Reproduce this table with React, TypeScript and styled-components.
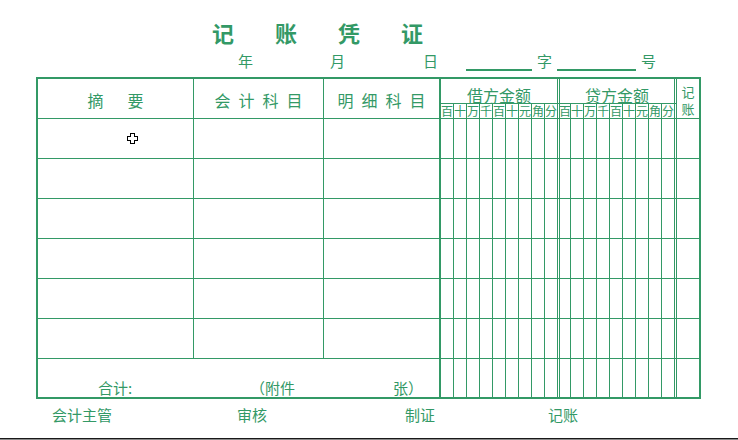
import React from 'react';
import styled, { createGlobalStyle, css } from 'styled-components';

const G = '#339966';

const GlobalStyle = createGlobalStyle`
  html, body { margin: 0; padding: 0; background: #fff; }
  body { font-family: "Noto Sans CJK SC", "Noto Sans", sans-serif; color: ${G}; }
`;

const Page = styled.div`
  width: 738px;
  height: 440px;
  display: flex;
  flex-direction: column;
  background: #fff;
  overflow: hidden;
`;

const Title = styled.h1`
  margin: 21px 0 0;
  padding-left: 212px;
  display: flex;
  gap: 41px;
  font-size: 22px;
  line-height: 22px;
  font-weight: 700;
  color: ${G};
`;

const DateRow = styled.div`
  display: flex;
  align-items: flex-end;
  height: 18px;
  margin-top: 10px;
  padding-left: 238px;
  font-size: 15px;
  line-height: 16px;
`;

const Slot = styled.span<{ $w: number; $center?: boolean; $pl?: number }>`
  width: ${(p) => p.$w}px;
  flex: none;
  text-align: ${(p) => (p.$center ? 'center' : 'left')};
  padding-left: ${(p) => p.$pl ?? 0}px;
  padding-bottom: 2px;
  box-sizing: border-box;
  white-space: pre;
`;

const Blank = styled.span<{ $w: number }>`
  width: ${(p) => p.$w}px;
  height: 2px;
  flex: none;
  background: ${G};
`;

const Sheet = styled.div`
  margin: 6px 0 0 36px;
  width: 665px;
  height: 322px;
  box-sizing: border-box;
  border: 2px solid ${G};
  display: grid;
  grid-template-columns: 156px 130px 117px repeat(8, 13px) 15px 11px repeat(7, 13px) 15px 22px;
  grid-template-rows: 25px 15px repeat(6, 40px) 38px;
`;

type Line = 'none' | 'thin' | 'thick' | 'double';

const lineCss = (l: Line) => {
  switch (l) {
    case 'thin':
      return `1px solid ${G}`;
    case 'thick':
      return `2px solid ${G}`;
    case 'double':
      return `3px double ${G}`;
    default:
      return 'none';
  }
};

const Cell = styled.div<{ $r: Line; $b?: boolean; $cs?: number; $rs?: number }>`
  box-sizing: border-box;
  position: relative;
  min-width: 0;
  border-right: ${(p) => lineCss(p.$r)};
  border-bottom: ${(p) => (p.$b ? `1px solid ${G}` : 'none')};
  ${(p) => p.$cs && css`grid-column: span ${p.$cs};`}
  ${(p) => p.$rs && css`grid-row: span ${p.$rs};`}
  display: flex;
  align-items: center;
  justify-content: center;
`;

const HeadLabel = styled.div<{ $gap: number }>`
  display: flex;
  gap: ${(p) => p.$gap}px;
  font-size: 16px;
  line-height: 16px;
  padding-top: 2px;
`;

const MoneyCell = styled(Cell)`
  align-items: flex-end;
  font-size: 16px;
  line-height: 16px;
`;

const DigitHead = styled(Cell)`
  font-size: 12px;
  line-height: 14px;
  overflow: visible;
  white-space: nowrap;
`;

const JzHead = styled(Cell)`
  flex-direction: column;
  justify-content: flex-end;
  padding-bottom: 1px;
  font-size: 13px;
  line-height: 17px;
`;

const TotalCell = styled(Cell)`
  justify-content: flex-start;
  align-items: flex-end;
  padding: 0 0 1px 60px;
  font-size: 15px;
  line-height: 17px;
`;

const Signatures = styled.div`
  display: flex;
  margin-top: 7px;
  padding-left: 52px;
  font-size: 15px;
  line-height: 17px;
`;

const SigSlot = styled.span<{ $w: number }>`
  width: ${(p) => p.$w}px;
  flex: none;
`;

const Filler = styled.div`
  flex: 1;
`;

const BottomEdge = styled.div`
  height: 1px;
  border-top: 1px solid #1a1a1a;
  background: #8a8a8a;
  margin-bottom: 0;
  flex: none;
`;

const Cursor = styled.svg`
  position: absolute;
  left: 89px;
  top: 14px;
`;

const digits = ['百', '十', '万', '千', '百', '十', '元', '角', '分'];

function moneyCells(row: number, header: boolean, bottom: boolean) {
  const out: React.ReactNode[] = [];
  for (let g = 0; g < 2; g++) {
    digits.forEach((d, i) => {
      const r: Line = i === 8 ? 'double' : 'thin';
      const key = `${row}-${g}-${i}`;
      out.push(
        header ? (
          <DigitHead key={key} $r={r} $b>
            {d}
          </DigitHead>
        ) : (
          <Cell key={key} $r={r} $b={bottom} />
        )
      );
    });
  }
  return out;
}

const MoveCursor = () => (
  <Cursor width="11" height="11" viewBox="0 0 11 11" shapeRendering="crispEdges">
    <path
      d="M3.5 0.5H7.5V3.5H10.5V7.5H7.5V10.5H3.5V7.5H0.5V3.5H3.5Z"
      fill="#fff"
      stroke="#000"
      strokeWidth="1"
    />
  </Cursor>
);

export default function App() {
  const bodyRows = [0, 1, 2, 3, 4, 5];
  return (
    <>
      <GlobalStyle />
      <Page>
        <Title>
          <span>记</span>
          <span>账</span>
          <span>凭</span>
          <span>证</span>
        </Title>
        <DateRow>
          <Slot $w={92}>年</Slot>
          <Slot $w={93}>月</Slot>
          <Slot $w={43}>日</Slot>
          <Blank $w={66} />
          <Slot $w={25} $center>
            字
          </Slot>
          <Blank $w={79} />
          <Slot $w={30} $pl={5}>
            号
          </Slot>
        </DateRow>
        <Sheet>
          <Cell $r="thin" $b $rs={2}>
            <HeadLabel $gap={24}>
              <span>摘</span>
              <span>要</span>
            </HeadLabel>
          </Cell>
          <Cell $r="thin" $b $rs={2}>
            <HeadLabel $gap={8}>
              <span>会</span>
              <span>计</span>
              <span>科</span>
              <span>目</span>
            </HeadLabel>
          </Cell>
          <Cell $r="thick" $b $rs={2}>
            <HeadLabel $gap={8}>
              <span>明</span>
              <span>细</span>
              <span>科</span>
              <span>目</span>
            </HeadLabel>
          </Cell>
          <MoneyCell $r="double" $b $cs={9}>
            借方金额
          </MoneyCell>
          <MoneyCell $r="double" $b $cs={9}>
            贷方金额
          </MoneyCell>
          <JzHead $r="none" $b $rs={2}>
            <span>记</span>
            <span>账</span>
          </JzHead>
          {moneyCells(-1, true, true)}
          {bodyRows.map((r) => (
            <React.Fragment key={r}>
              <Cell $r="thin" $b>
                {r === 0 && <MoveCursor />}
              </Cell>
              <Cell $r="thin" $b />
              <Cell $r="thick" $b />
              {moneyCells(r, false, true)}
              <Cell $r="none" $b />
            </React.Fragment>
          ))}
          <TotalCell $r="thick" $cs={3}>
            <SigSlot $w={152}>合计:</SigSlot>
            <SigSlot $w={143}>（附件</SigSlot>
            <SigSlot $w={40}>张）</SigSlot>
          </TotalCell>
          {moneyCells(9, false, false)}
          <Cell $r="none" />
        </Sheet>
        <Signatures>
          <SigSlot $w={185}>会计主管</SigSlot>
          <SigSlot $w={168}>审核</SigSlot>
          <SigSlot $w={143}>制证</SigSlot>
          <SigSlot $w={60}>记账</SigSlot>
        </Signatures>
        <Filler />
        <BottomEdge />
      </Page>
    </>
  );
}
